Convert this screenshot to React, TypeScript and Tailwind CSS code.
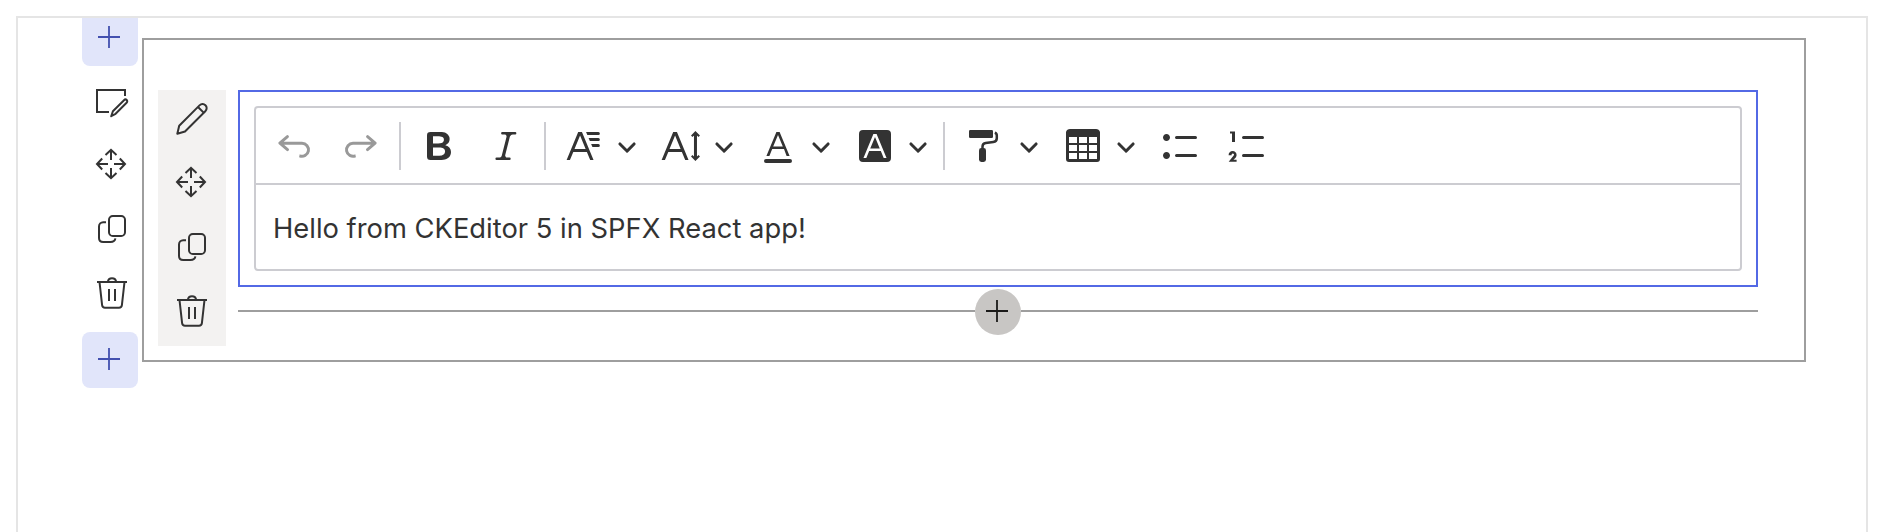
import type { ReactNode } from 'react';

const UNDO =
  'm5.042 9.367 2.189 1.837a.75.75 0 0 1-.965 1.149l-3.788-3.18a.747.747 0 0 1-.21-.284.75.75 0 0 1 .17-.945L6.23 4.762a.75.75 0 1 1 .964 1.15L4.863 7.866h8.917A.75.75 0 0 1 14 7.9a4 4 0 1 1-1.477 7.718l.344-1.489a2.5 2.5 0 1 0 1.094-4.73l.008-.032H5.042z';
const REDO =
  'm14.958 9.367-2.189 1.837a.75.75 0 0 0 .965 1.149l3.788-3.18a.747.747 0 0 0 .21-.284.75.75 0 0 0-.17-.945L13.77 4.762a.75.75 0 1 0-.964 1.15l2.331 1.955H6.22A.75.75 0 0 0 6 7.9a4 4 0 1 0 1.477 7.718l-.344-1.489A2.5 2.5 0 1 1 6.039 9.4l-.008-.032h8.927z';
const BOLD =
  'M10.187 17H5.773c-.637 0-1.092-.138-1.364-.415-.273-.277-.409-.718-.409-1.323V4.738c0-.617.14-1.062.419-1.332.279-.27.73-.406 1.354-.406h4.68c.69 0 1.288.041 1.793.124.506.083.96.242 1.36.478.341.197.644.447.906.75a3.262 3.262 0 0 1 .808 2.162c0 1.401-.722 2.426-2.167 3.075C15.05 10.175 16 11.315 16 13.01a3.756 3.756 0 0 1-2.296 3.504 6.1 6.1 0 0 1-1.517.377c-.571.073-1.238.11-2 .11zm-.217-6.217H7v4.087h3.069c1.977 0 2.965-.69 2.965-2.072 0-.707-.256-1.22-.768-1.537-.512-.319-1.277-.478-2.296-.478zM7 5.13v3.619h2.606c.729 0 1.292-.067 1.69-.2a1.6 1.6 0 0 0 .91-.765c.165-.267.247-.566.247-.897 0-.707-.26-1.176-.778-1.409-.519-.232-1.31-.348-2.375-.348H7z';
const ITALIC =
  'm9.586 14.633.021.004c-.036.335.095.655.393.962.082.083.173.15.274.201h1.474a.6.6 0 1 1 0 1.2H5.304a.6.6 0 0 1 0-1.2h1.15c.474-.07.809-.182 1.005-.334.157-.122.291-.32.404-.597l2.416-9.55a1.053 1.053 0 0 0-.281-.823 1.12 1.12 0 0 0-.442-.296H8.15a.6.6 0 0 1 0-1.2h6.443a.6.6 0 1 1 0 1.2h-1.195c-.376.056-.65.155-.823.296-.215.175-.423.439-.623.79l-2.366 9.347z';
const FONT_FAMILY =
  'M11.03 3h6.149a.75.75 0 1 1 0 1.5h-5.514L11.03 3zm1.27 3h4.879a.75.75 0 1 1 0 1.5h-4.244L12.3 6zm1.27 3h3.609a.75.75 0 1 1 0 1.5h-2.973L13.57 9zm-2.754 2.5L8.038 4.785 5.261 11.5h5.555zm.62 1.5H4.641l-1.666 4.028H1.312l5.789-14h1.875l5.789 14h-1.663L11.436 13z';
const FONT_SIZE =
  'M9.816 11.5 7.038 4.785 4.261 11.5h5.555Zm.62 1.5H3.641l-1.666 4.028H.312l5.789-14h1.875l5.789 14h-1.663L10.436 13Zm7.55 2.279.779-.779.707.707-2.265 2.265-2.193-2.265.707-.707.765.765V4.825c0-.042 0-.083.002-.123l-.77.78-.707-.707L17.207 2.5l2.265 2.265-.707.707-.782-.782c.002.043.003.089.003.135v10.454Z';
const FONT_COLOR =
  'M12.4 10.3 10 4.5l-2.4 5.8h4.8zm.5 1.2H7.1L5.7 15H4.2l5-12h1.6l5 12h-1.5L13 11.5zm3.1 7H4a1 1 0 0 1 0-2h12a1 1 0 0 1 0 2z';
const FONT_BACKGROUND =
  'M4 2h12a2 2 0 0 1 2 2v12a2 2 0 0 1-2 2H4a2 2 0 0 1-2-2V4a2 2 0 0 1 2-2zm8.38 9.262H7.62L10 5.506l2.38 5.756zm.532 1.285L14.34 16h1.426L10.804 4H9.196L4.234 16H5.66l1.428-3.453h5.824z';
const TABLE =
  'M3 5.5v3h4v-3H3Zm0 4v3h4v-3H3Zm0 4v3h4v-3H3Zm5 3h4v-3H8v3Zm5 0h4v-3h-4v3Zm4-4v-3h-4v3h4Zm0-4v-3h-4v3h4Zm1.5 8A1.5 1.5 0 0 1 17 18H3a1.5 1.5 0 0 1-1.5-1.5V3c.222-.863 1.068-1.5 2-1.5h13c.932 0 1.778.637 2 1.5v13.5Zm-6.5-4v-3H8v3h4Zm0-4v-3H8v3h4Z';
const BULLETED =
  'M7 5.75c0 .414.336.75.75.75h9.5a.75.75 0 1 0 0-1.5h-9.5a.75.75 0 0 0-.75.75zm-6 0C1 4.784 1.777 4 2.75 4c.966 0 1.75.777 1.75 1.75 0 .966-.777 1.75-1.75 1.75C1.784 7.5 1 6.723 1 5.75zm6 9c0 .414.336.75.75.75h9.5a.75.75 0 1 0 0-1.5h-9.5a.75.75 0 0 0-.75.75zm-6 0c0-.966.777-1.75 1.75-1.75.966 0 1.75.777 1.75 1.75 0 .966-.777 1.75-1.75 1.75-.966 0-1.75-.777-1.75-1.75z';
const NUMBERED =
  'M7 5.75c0 .414.336.75.75.75h9.5a.75.75 0 1 0 0-1.5h-9.5a.75.75 0 0 0-.75.75zM3.5 3v5H2V3.7H1v-1h2.5V3zM.343 17.857l2.59-3.257H2.92a.6.6 0 1 0-1.04 0H.302a2 2 0 1 1 3.995 0h-.001c-.048.405-.16.734-.333.988-.175.254-.59.692-1.244 1.312H4.3v1h-4l.043-.043zM7 14.75a.75.75 0 0 1 .75-.75h9.5a.75.75 0 1 1 0 1.5h-9.5a.75.75 0 0 1-.75-.75z';
const CHEVRON =
  'M.941 4.523a.75.75 0 1 1 1.06-1.06l3.006 3.005 3.005-3.005a.75.75 0 1 1 1.06 1.06l-3.549 3.55a.75.75 0 0 1-1.168-.136L.941 4.523z';

function Tool({ d, label, className = '' }: { d: string; label: string; className?: string }) {
  return (
    <button aria-label={label} className={`size-10 shrink-0 ${className}`}>
      <svg viewBox="0 0 20 20" className="size-10" fill="currentColor" fillRule="evenodd">
        <path d={d} />
      </svg>
    </button>
  );
}

function Chevron() {
  return (
    <svg viewBox="0 0 10 10" className="mt-2.5 ml-[13px] size-5 shrink-0" fill="currentColor">
      <path d={CHEVRON} />
    </svg>
  );
}

function Separator({ className }: { className: string }) {
  return <span className={`-mt-1 h-12 w-0.5 shrink-0 bg-[#ccccd1] ${className}`} />;
}

function FormatPainter() {
  return (
    <button aria-label="Format painter" className="ml-[21px] size-10 shrink-0">
      <svg viewBox="0 0 40 40" className="size-10" fill="currentColor">
        <rect x="3" y="4" width="24" height="8" rx="1.2" />
        <rect x="13" y="22" width="7" height="14" rx="2.4" />
        <path
          d="M28.8 6.8c1.4.5 2 1.2 2 2.7v2.8c0 2.2-1.3 3.5-3.5 3.8l-7.6 1c-2.2.3-3.2 1.6-3.2 3.7V23"
          fill="none"
          stroke="currentColor"
          strokeWidth="2.5"
        />
      </svg>
    </button>
  );
}

function LineIcon({ className = '', children }: { className?: string; children: ReactNode }) {
  return (
    <svg
      viewBox="0 0 32 32"
      className={`size-8 shrink-0 overflow-visible ${className}`}
      fill="none"
      stroke="currentColor"
      strokeWidth="2"
    >
      {children}
    </svg>
  );
}

function Move({ className }: { className: string }) {
  return (
    <LineIcon className={className}>
      <path d="M15 12V2M9.5 7 15 1.8 20.5 7M15 20v10M9.5 25l5.5 5.2L20.5 25M12 16H1.5M6.2 10.5 1 16l5.2 5.5M18 16h10.5M23.8 10.5 29 16l-5.2 5.5" />
    </LineIcon>
  );
}

function Copy({ className }: { className: string }) {
  return (
    <LineIcon className={className}>
      <rect x="13" y="3" width="16" height="20" rx="3.8" />
      <path d="M10 9.2H7.2C4.8 9.2 3 11 3 13.5V25c0 2.5 1.8 4 4.2 4h7.3c2.6 0 4.5-1.2 4.9-3.6" />
    </LineIcon>
  );
}

function Trash({ className }: { className: string }) {
  return (
    <LineIcon className={className}>
      <path d="M1 5h30M11.8 4.8C12.2 2.4 13.8 1.2 16 1.2s3.8 1.2 4.2 3.6M3.5 5l2.6 23.2c.2 1.7 1.2 2.6 2.9 2.6h14c1.7 0 2.7-.9 2.9-2.6L28.5 5M13 12v12M19 12v12" />
    </LineIcon>
  );
}

function Plus({ className = '' }: { className?: string }) {
  return (
    <svg viewBox="0 0 22 22" className={`size-[22px] ${className}`} stroke="currentColor" strokeWidth="1.8">
      <path d="M11 0v22M0 11h22" />
    </svg>
  );
}

function AddSection({ className }: { className: string }) {
  return (
    <button
      aria-label="Add section"
      className={`flex h-14 w-14 shrink-0 items-start rounded-lg bg-[#e1e5fa] pt-4 pl-4 text-[#4350af] ${className}`}
    >
      <Plus />
    </button>
  );
}

export default function App() {
  return (
    <div className="h-[532px] w-full overflow-hidden bg-white pt-4 pr-[18px] pl-4 font-['Inter',sans-serif] text-[#333333]">
      <div className="flex h-[560px] items-start overflow-hidden border-2 border-[#e5e5e5]">
        <aside className="ml-16 flex w-14 shrink-0 flex-col items-start">
          <AddSection className="-mt-2" />
          <LineIcon className="mt-[21px] ml-[14px]">
            <path d="M29 9V3H1v22h12" />
            <path d="M15.2 29.2l1.7-5L28 13.2c.8-.8 2-.9 2.7-.2.8.8.7 1.9-.1 2.7L19.6 26.8z" strokeLinejoin="round" />
          </LineIcon>
          <Move className="mt-[29px] ml-[14px]" />
          <Copy className="mt-[33px] ml-[14px]" />
          <Trash className="mt-8 ml-[14px]" />
          <AddSection className="mt-[23px]" />
        </aside>

        <section className="mt-5 ml-1 flex h-[324px] w-[1664px] shrink-0 items-start border-2 border-[#9e9e9e]">
          <aside className="mt-[50px] ml-3.5 flex h-64 w-[68px] shrink-0 flex-col items-start bg-[#f3f2f1] pt-[13px] pl-[18px]">
            <LineIcon>
              <path
                d="M1.3 30.7l1.9-8L23.5 2.4c2-2 4.4-1.6 5.9-.1s1.9 3.9-.1 5.9L9 28.5zM22 4l5.9 5.9"
                strokeLinejoin="round"
              />
            </LineIcon>
            <Move className="mt-[31px]" />
            <Copy className="mt-[33px]" />
            <Trash className="mt-8" />
          </aside>

          <main className="mt-[50px] ml-3 flex w-[1520px] shrink-0 flex-col">
            <div className="h-[197px] border-2 border-[#5369e5] p-3.5">
              <div className="flex h-[165px] flex-col rounded border-2 border-[#ccccd1]">
                <div className="flex h-[77px] shrink-0 items-start border-b-2 border-[#ccccd1] pt-[18px]">
                  <Tool d={UNDO} label="Undo" className="ml-[18px] text-[#999999]" />
                  <Tool d={REDO} label="Redo" className="ml-[27px] text-[#999999]" />
                  <Separator className="ml-[18px]" />
                  <Tool d={BOLD} label="Bold" className="ml-[18px]" />
                  <Tool d={ITALIC} label="Italic" className="ml-[27px]" />
                  <Separator className="ml-[18px]" />
                  <Tool d={FONT_FAMILY} label="Font family" className="ml-[18px]" />
                  <Chevron />
                  <Tool d={FONT_SIZE} label="Font size" className="ml-6" />
                  <Chevron />
                  <Tool d={FONT_COLOR} label="Font color" className="ml-6" />
                  <Chevron />
                  <Tool d={FONT_BACKGROUND} label="Font background color" className="ml-6" />
                  <Chevron />
                  <Separator className="ml-[15px]" />
                  <FormatPainter />
                  <Chevron />
                  <Tool d={TABLE} label="Insert table" className="ml-6" />
                  <Chevron />
                  <Tool d={BULLETED} label="Bulleted list" className="ml-[25px]" />
                  <Tool d={NUMBERED} label="Numbered list" className="ml-[27px]" />
                </div>
                <p className="pt-6 pl-[17px] text-[27.35px] leading-[40px] whitespace-nowrap">
                  Hello from CKEditor 5 in SPFX React app!
                </p>
              </div>
            </div>
            <div className="mt-0.5 flex h-[46px] items-center">
              <span className="-mt-0.5 h-0.5 w-[737px] bg-[#9e9e9e]" />
              <button
                aria-label="Add web part"
                className="flex size-[46px] shrink-0 items-start rounded-full bg-[#c8c6c4] pt-[11px] pl-[11px] text-[#1b1a19]"
              >
                <Plus />
              </button>
              <span className="-mt-0.5 h-0.5 grow bg-[#9e9e9e]" />
            </div>
          </main>
        </section>
      </div>
    </div>
  );
}
